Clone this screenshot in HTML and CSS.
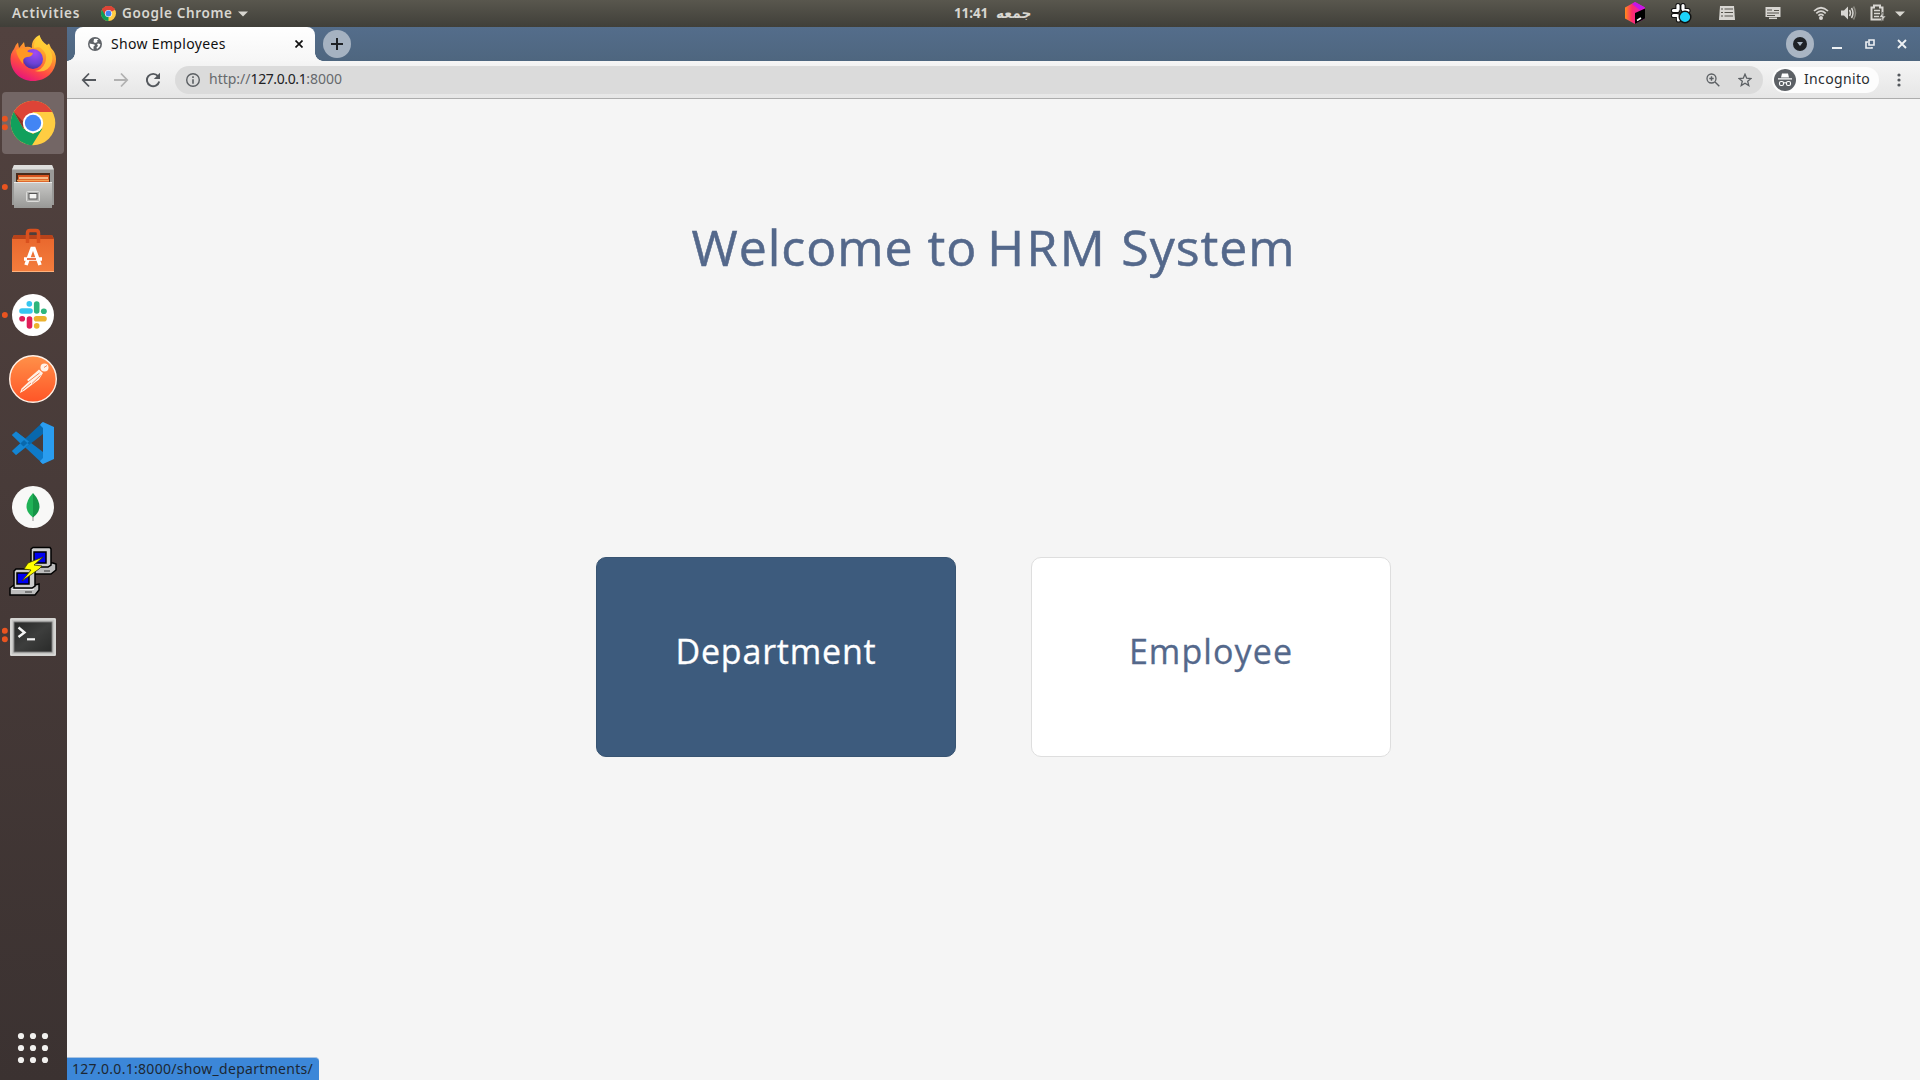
FILE: index.html
```html
<!DOCTYPE html>
<html lang="en">
<head>
<meta charset="utf-8">
<title>Show Employees</title>
<link rel="stylesheet" href="styles.css">
</head>
<body>
<header class="panel">
  <span class="activities">Activities</span>
  <svg class="app-icon" viewBox="0 0 44 44"><circle cx="22" cy="22" r="22" fill="#fc4"/><path d="M22 22 2.900 11A22 22 0 0 1 41.100 11Z" fill="#dd4437"/><path d="M22 22 22 44A22 22 0 0 1 2.900 11Z" fill="#0f9d58"/><path d="M22 11H41A22 22 0 0 0 2.900 11L12 27Z" fill="#dd4437"/><circle cx="22" cy="22" r="10.500" fill="#fff"/><circle cx="22" cy="22" r="8.500" fill="#4285f4"/></svg>
  <span class="app-name">Google Chrome</span>
  <svg class="caret" viewBox="0 0 10 6"><path d="M0 .5H10L5 5.500Z" fill="#d8d6d0"/></svg>
  <span class="clock"><span class="time">11:41</span><span class="day" dir="rtl">جمعه</span></span>
  <div class="tray">
    <svg class="tray-icon" viewBox="0 0 24 27"><defs><linearGradient id="cube" x1="0" x2="1"><stop offset="0" stop-color="#ff8a1c"/><stop offset=".35" stop-color="#ff2d6b"/><stop offset="1" stop-color="#e318d8"/></linearGradient></defs><path d="M12 2 22 7.500V18.500L12 24 2 18.500V7.500Z" fill="url(#cube)"/><path d="M12 2 22 7.500 17 10 9 4Z" fill="#c317e8"/><path d="M12 13 22 8.500V18.500L12 24Z" fill="#000"/><path d="M14 20.500 18 18" stroke="#fff" stroke-width="1.500"/></svg>
    <svg class="tray-icon" viewBox="0 0 24 27"><g stroke-linecap="round"><g stroke="#111" stroke-width="5.200"><path d="M9 5.500V9.500M14 5.500V8M4.500 10.500H8.500M4.500 15.500H8M9.500 16V20M14.500 10.500H19"/></g><g stroke="#fff" stroke-width="3.200"><path d="M9 5.500V9.500M14 5.500V9M4.500 10.500H8.500M4.500 15.500H8M9.500 16V20M14.500 10.500H19"/></g></g><circle cx="16" cy="17" r="5.800" fill="#1bd3fb" stroke="#111" stroke-width="1.400"/></svg>
    <svg class="tray-icon" viewBox="0 0 24 27"><path d="M5 6H19L20 20H4Z" fill="#d8d6d2"/><path d="M6 9H8M9.500 9H18M6 12.500H8M9.500 12.500H18M6 16H8M9.500 16H18" stroke="#55534c" stroke-width="1.200"/></svg>
    <svg class="tray-icon" viewBox="0 0 24 27"><path d="M4.500 7H19.500V17H4.500Z" fill="#d8d6d2"/><path d="M6 10H11M6 13H18M13 10.500H18M6 15.500H14" stroke="#55534c" stroke-width="1.200"/><path d="M8 18.300H16" stroke="#d8d6d2" stroke-width="1.500"/></svg>
    <svg class="tray-icon wifi" viewBox="0 0 24 27"><g fill="none" stroke="#d8d6d2" stroke-width="1.700"><path d="M5 11Q12 4.500 19 11M7.300 13.300Q12 9 16.700 13.300M9.400 15.600Q12 13.300 14.600 15.600"/></g><circle cx="12" cy="18" r="2" fill="#d8d6d2"/></svg>
    <svg class="tray-icon sound" viewBox="0 0 24 27"><path d="M5 10.500H8L12 6.500V19.500L8 15.500H5Z" fill="#d8d6d2"/><path d="M13.500 10Q15.500 13 13.500 16M15.500 8Q18.500 13 15.500 18" fill="none" stroke="#d8d6d2" stroke-width="1.500"/><path d="M17.500 6.500Q21.500 13 17.500 19.500" fill="none" stroke="#8a8880" stroke-width="1.500"/></svg>
    <svg class="tray-icon battery" viewBox="0 0 24 27"><path d="M8 5.500H14V7.500H16.500V19.500H5.500V7.500H8Z" fill="none" stroke="#d8d6d2" stroke-width="2"/><path d="M8 10.500H14M8 13.500H14M8 16.500H13" stroke="#d8d6d2" stroke-width="1.500"/><path d="M17 12 13 17.500H16L15 22 20 16H17Z" fill="#d8d6d2" stroke="#4b4a43" stroke-width=".6"/></svg>
    <svg class="caret tray-caret" viewBox="0 0 10 6"><path d="M0 .5H10L5 5.500Z" fill="#d8d6d0"/></svg>
  </div>
</header>
<div class="desktop">
  <nav class="dock">
    <div class="dock-item">
      <svg viewBox="0 0 62 62"><defs><linearGradient id="ff" x1=".8" y1="0" x2=".3" y2="1"><stop offset="0" stop-color="#fff04a"/><stop offset=".35" stop-color="#ffa02c"/><stop offset=".7" stop-color="#ff4a43"/><stop offset="1" stop-color="#e5127f"/></linearGradient><radialGradient id="ffg" cx=".6" cy=".2" r=".9"><stop offset="0" stop-color="#a24af5"/><stop offset=".6" stop-color="#6b42d6"/><stop offset="1" stop-color="#3d2a92"/></radialGradient></defs><path d="M12 21Q13 17 16 14.500L17 20 22 14 23 19Q27 18 30 20C29 14 33 9 37.500 7Q39 13 45 17L47 15.500 49 20Q54 25 54 31C54 44 44 53 31 53S8.500 43 8.500 31Q8.500 25 12 21Z" fill="url(#ff)"/><circle cx="31" cy="31" r="10" fill="url(#ffg)"/><path d="M14 22Q23 17 26 24L31 25Q30 29 25 29Q20 30 21 36Q15 29 14 22Z" fill="#ff9824"/><path d="M37 19Q47 25 43 35Q40 42 33 43Q46 46 50 34Q52 26 45 18Q40 15 37.500 8Q31 14 32 20Z" fill="#ffcf35" opacity=".8"/></svg>
    </div>
    <div class="dock-item active">
      <svg viewBox="0 0 62 62"><circle cx="31" cy="31" r="22.300" fill="#ffcd42"/><path d="M31 20H50.300A22.300 22.300 0 0 0 11.800 19.700L21.500 36.500Z" fill="#dd4437"/><path d="M11.800 19.700A22.300 22.300 0 0 0 30 53.200L40.500 36.500 31 42 21.500 36.500Z" fill="#11a05c"/><path d="M11.800 19.700 21.500 36.500 21.500 30Z" fill="#8a3527"/><circle cx="31" cy="31" r="10.200" fill="#fff"/><circle cx="31" cy="31" r="8.200" fill="#4285f4"/><g fill="#e95420"><circle cx="2.800" cy="26.800" r="3"/><circle cx="2.800" cy="35.200" r="3"/></g></svg>
    </div>
    <div class="dock-item">
      <svg viewBox="0 0 62 62"><defs><linearGradient id="cab" x2="0" y2="1"><stop offset="0" stop-color="#c9c9c7"/><stop offset="1" stop-color="#989896"/></linearGradient></defs><path d="M12 9H50L52 14V49H10V14Z" fill="#9a9a98"/><path d="M12 9H50L52 13.500H10Z" fill="#dededc"/><path d="M14 17H48V27H14Z" fill="#4a2b1c"/><path d="M16 19H47V27H16Z" fill="#d9541f"/><path d="M17 22H46" stroke="#ffe2b4" stroke-width="1.400"/><path d="M15 24.500H47" stroke="#f3a458" stroke-width="1.500"/><path d="M12 26H50V52H12Z" fill="url(#cab)"/><path d="M12 26.500H50" stroke="#e9e9e7"/><rect x="24.500" y="35.500" width="13" height="10" rx="1" fill="#b4b4b2" stroke="#dcdcda"/><rect x="27" y="37.500" width="8" height="5.500" fill="#f4f4f2" stroke="#555"/><circle cx="2.800" cy="31" r="3" fill="#e95420"/></svg>
    </div>
    <div class="dock-item">
      <svg viewBox="0 0 62 62"><defs><linearGradient id="bag" x2="0" y2="1"><stop offset="0" stop-color="#e8662c"/><stop offset="1" stop-color="#f47d3d"/></linearGradient></defs><path d="M12 15H50L52 19V52H10V19Z" fill="url(#bag)"/><path d="M12 15H50L52 19H10Z" fill="#b8431a"/><path d="M25.500 23V13Q25.500 10.500 28 10.500H34Q36.500 10.500 36.500 13V23" fill="none" stroke="#d9501e" stroke-width="3.500"/><path d="M10 51.500H52" stroke="#ffb27d"/><g fill="none" stroke="#fff" stroke-width="3.600"><path d="M24 45 30 28.500H32L38 45M22 39H40"/></g><path d="M25 39H34" stroke="#e95420" stroke-width="1.600"/></svg>
    </div>
    <div class="dock-item">
      <svg viewBox="0 0 62 62"><circle cx="31" cy="31" r="21" fill="#fff"/><g stroke-width="5.600" stroke-linecap="round"><path d="M20 27H28" stroke="#36c5f0"/><path d="M27.300 19.800V20" stroke="#36c5f0"/><path d="M34.700 20V27" stroke="#2eb67d"/><path d="M42 27.300H41.700" stroke="#2eb67d"/><path d="M42 34.700H34.500" stroke="#ecb22e"/><path d="M34.700 42V41.700" stroke="#ecb22e"/><path d="M27.500 42V35" stroke="#e01e5a"/><path d="M20 34.700H20.300" stroke="#e01e5a"/></g><circle cx="2.800" cy="31" r="3" fill="#e95420"/></svg>
    </div>
    <div class="dock-item">
      <svg viewBox="0 0 62 62"><defs><linearGradient id="pm" x2="0" y2="1"><stop offset="0" stop-color="#ff9149"/><stop offset="1" stop-color="#ff5527"/></linearGradient></defs><circle cx="31" cy="31" r="23.300" fill="url(#pm)" stroke="#fff0e5" stroke-width="1.400"/><circle cx="42.500" cy="19.500" r="4" fill="#fff1e6"/><path d="M37 21.500 41 25 37 31.500 31 36 22.500 42.500 18 45 19.500 40.500 27 33.500 25 32Z" fill="#fff1e6"/><path d="M26.500 33.500 37.500 25M30 35.500 38.500 27.500M20 42.500 29 35M42 19.500 45 17.500" stroke="#f57a48" stroke-width=".9"/></svg>
    </div>
    <div class="dock-item">
      <svg viewBox="0 0 62 62"><path d="M14 19.500 10 23 41 52V40Z" fill="#0e7ac9"/><path d="M10 39 14 43 41 22V10Z" fill="#0868ad"/><path d="M10 23 14 19.500 27 29.500 21.500 34.500ZM10 39 14 43 27 32.500 22 28Z" fill="#1585d2"/><path d="M41 10 52 15V47L41 52Q39 51 38 49L41 46V16L38 13Q39 11 41 10Z" fill="#2a9df0"/></svg>
    </div>
    <div class="dock-item">
      <svg viewBox="0 0 62 62"><circle cx="31" cy="31" r="21" fill="#f8f8f7"/><path d="M31 38V45" stroke="#aaa" stroke-width="1.300"/><path d="M31 17Q24.500 24 24.500 31Q25 37 31 41.500Z" fill="#20b257"/><path d="M31 17Q37.500 24 37.500 31Q37 37 31 41.500Z" fill="#159447"/></svg>
    </div>
    <div class="dock-item">
      <svg viewBox="0 0 62 62"><g stroke="#000" stroke-width="1.500"><path d="M26 26 30 23H51L54 24V30L49 34H26Z" fill="#bdbdbd"/><path d="M29 9 31 7.500H48L49 9V25L46 27H29Z" fill="#ccc"/><path d="M32 12H44V23H32Z" fill="#0000f0"/><path d="M8 48 12 45H33L37 44V50L33 55H8Z" fill="#bdbdbd"/><path d="M12 31 14 29H31L33 31V46L30 48H12Z" fill="#ccc"/><path d="M15 33H27V44H15Z" fill="#0000f0"/></g><path d="M10 49.500H32" stroke="#eee"/><path d="M23 52H30M42 31H48" stroke="#333"/><path d="M41 17 26 23 22 29 29 30 20 41 37 29 40 26 32 25Z" fill="#ff0" stroke="#3c3c00" stroke-width=".8"/></svg>
    </div>
    <div class="dock-item">
      <svg viewBox="0 0 62 62"><defs><linearGradient id="term" x2="1" y2="1"><stop offset="0" stop-color="#272827"/><stop offset=".5" stop-color="#3d3e3d"/><stop offset="1" stop-color="#292a29"/></linearGradient></defs><rect x="8" y="14" width="46" height="38" rx="1.500" fill="#c6c6c4"/><rect x="9" y="15" width="44" height="36" fill="none" stroke="#e2e2e0"/><rect x="12" y="18" width="38" height="30" fill="url(#term)" stroke="#777"/><path d="M16.500 23.500 22.500 28.500 16.500 33" fill="none" stroke="#f4f4f4" stroke-width="2.400"/><path d="M25 35.300H33" stroke="#f4f4f4" stroke-width="2.200"/><g fill="#e95420"><circle cx="2.800" cy="26.800" r="3"/><circle cx="2.800" cy="35.200" r="3"/></g></svg>
    </div>
    <div class="dock-item show-apps">
      <svg viewBox="0 0 62 62"><g fill="#f2f1ef"><circle cx="19" cy="19" r="3.100"/><circle cx="31" cy="19" r="3.100"/><circle cx="43" cy="19" r="3.100"/><circle cx="19" cy="31" r="3.100"/><circle cx="31" cy="31" r="3.100"/><circle cx="43" cy="31" r="3.100"/><circle cx="19" cy="43" r="3.100"/><circle cx="31" cy="43" r="3.100"/><circle cx="43" cy="43" r="3.100"/></g></svg>
    </div>
  </nav>
  <div class="browser">
    <div class="tabstrip">
      <div class="tab">
        <svg class="favicon" viewBox="0 0 14 14"><circle cx="7" cy="7" r="7" fill="#5f6368"/><path d="M1.500 6.500Q4 7 6.500 7.500 7.500 9 5.500 9.500L5.500 12.500Q1.500 11 1.500 6.500ZM6 2Q9 1.200 10.500 2.600L9 3.500 9.500 5 7 6 5.500 5ZM9 7Q10.500 6 12.500 7.500 12 10.500 9 12L8.500 10.500 10 9Z" fill="#fff"/></svg>
        <span class="tab-title">Show Employees</span>
        <svg class="tab-close" viewBox="0 0 8 8"><path d="M.5 .5 7.500 7.500M7.500 .5 .5 7.500" stroke="#111" stroke-width="1.700"/></svg>
      </div>
      <svg class="round-button" viewBox="0 0 28 28"><circle cx="14" cy="14" r="14" fill="#a5b2c1"/><path d="M14 8V20M8 14H20" stroke="#1e2226" stroke-width="2"/></svg>
      <div class="window-controls">
        <svg class="round-button" viewBox="0 0 28 28"><circle cx="14" cy="14" r="14" fill="#a9b5c3"/><circle cx="14" cy="14" r="7" fill="#1f2226"/><path d="M11 12H17L14 16Z" fill="#a9b5c3"/></svg>
        <svg class="win" viewBox="0 0 10 10"><path d="M0 9H10" stroke="#eef1f4" stroke-width="2"/></svg>
        <svg class="win" viewBox="0 0 10 10"><path d="M4 1H9V6H4ZM3 3H1V9H7V8" fill="none" stroke="#eef1f4" stroke-width="1.600"/></svg>
        <svg class="win" viewBox="0 0 10 10"><path d="M1 1 9 9M9 1 1 9" stroke="#eef1f4" stroke-width="1.900"/></svg>
      </div>
    </div>
    <div class="toolbar">
      <svg class="nav-icon" viewBox="0 0 16 16"><path d="M15 8H2M8 1.500 1.800 8 8 14.500" fill="none" stroke="#54585d" stroke-width="1.800"/></svg>
      <svg class="nav-icon" viewBox="0 0 16 16"><path d="M1 8H14M8 1.500 14.200 8 8 14.500" fill="none" stroke="#b1b1b1" stroke-width="1.800"/></svg>
      <svg class="nav-icon" viewBox="0 0 16 16"><path d="M13 4.200A6.200 6.200 0 1 0 14.200 9.500" fill="none" stroke="#54585d" stroke-width="1.900"/><path d="M15 .8V7H8.800Z" fill="#54585d"/></svg>
      <div class="omnibox">
        <svg class="info" viewBox="0 0 14 14"><circle cx="7" cy="7" r="6.300" fill="none" stroke="#5b5f63" stroke-width="1.400"/><path d="M7 3.300V4.900M7 6.200V10.700" stroke="#5b5f63" stroke-width="1.600"/></svg>
        <span class="url"><span class="scheme">http://</span><span class="host">127.0.0.1</span><span class="port">:8000</span></span>
        <svg class="zoom" viewBox="0 0 14 14"><circle cx="5.500" cy="5.500" r="4.500" fill="none" stroke="#5b5f63" stroke-width="1.300"/><path d="M9 9 13.300 13.300M5.500 3.300V7.700M3.300 5.500H7.700" stroke="#5b5f63" stroke-width="1.400"/></svg>
        <svg class="star" viewBox="0 0 14 14"><path d="M7 1.200 8.700 5.200 13 5.500 9.700 8.300 10.800 12.600 7 10.300 3.200 12.600 4.300 8.300 1 5.500 5.300 5.200Z" fill="none" stroke="#5b5f63" stroke-width="1.300"/></svg>
      </div>
      <div class="incognito">
        <svg class="avatar" viewBox="0 0 22 22"><circle cx="11" cy="11" r="11" fill="#5c6065"/><path d="M7 8.500 8 4.500H14L15 8.500ZM4 9.300H18V10.400H4Z" fill="#fff"/><g fill="none" stroke="#fff" stroke-width="1.100"><rect x="5.500" y="12.500" width="4" height="4" rx="1.500"/><rect x="12.500" y="12.500" width="4" height="4" rx="1.500"/><path d="M9.500 13.800H12.500"/></g></svg>
        <span class="incognito-label">Incognito</span>
      </div>
      <svg class="menu" viewBox="0 0 4 16"><g fill="#54585d"><circle cx="2" cy="3" r="1.600"/><circle cx="2" cy="8" r="1.600"/><circle cx="2" cy="13" r="1.600"/></g></svg>
    </div>
    <main class="page">
      <h1 class="title">Welcome to <span class="acronym">HRM</span> System</h1>
      <div class="cards">
        <a class="card card-primary"><span class="label-department">Department</span></a>
        <a class="card"><span class="label-employee">Employee</span></a>
      </div>
      <div class="status">127.0.0.1:8000/show_departments/</div>
    </main>
  </div>
</div>
</body>
</html>
```
FILE: styles.css
```css
* { box-sizing: border-box; }
body {
  margin: 0;
  width: 1920px;
  height: 1080px;
  overflow: hidden;
  display: flex;
  flex-direction: column;
  font-family: "Noto Sans", "DejaVu Sans", sans-serif;
  font-size: 14px;
  white-space: nowrap;
}
svg { display: block; flex: none; }

/* System panel */
.panel {
  flex: none;
  height: 27px;
  display: flex;
  align-items: center;
  padding: 0 12px;
  background: linear-gradient(#59574e, #403f39);
  color: #d8d6d0;
  font-size: 13.5px;
  font-weight: 600;
  line-height: 27px;
}
.activities { width: 89px; letter-spacing: .8px; }
.app-icon { width: 15px; height: 15px; margin-right: 6px; }
.app-name { width: 116px; letter-spacing: .65px; }
.caret { width: 10px; height: 6px; }
.clock { display: flex; margin-left: 706px; }
.time { width: 42px; font-weight: 700; letter-spacing: -.1px; }
.day { font-family: "DejaVu Sans", sans-serif; font-size: 13.8px; }
.tray { display: flex; align-items: center; margin-left: auto; }
.tray-icon { width: 24px; height: 27px; margin-right: 22px; }
.tray-icon.wifi { margin-left: 2px; margin-right: 3px; }
.tray-icon.sound { margin-right: 6px; }
.tray-icon.battery { margin-right: 5px; }
.tray-caret { margin-right: 3px; }

.desktop { flex: 1; display: flex; min-height: 0; }

/* Dock */
.dock {
  flex: none;
  width: 67px;
  display: flex;
  flex-direction: column;
  gap: 2px;
  padding: 1px 3px 1px 2px;
  background: linear-gradient(#52423f, #3b3231);
}
.dock-item { width: 62px; height: 62px; border-radius: 4px; }
.dock-item.active { background: #736665; }
.show-apps { margin-top: auto; }

/* Browser window */
.browser { flex: 1; display: flex; flex-direction: column; min-width: 0; }
.tabstrip {
  flex: none;
  height: 34px;
  display: flex;
  align-items: center;
  padding: 0 13px 0 8px;
  background: linear-gradient(#546d8b, #4e667f);
}
.tab {
  position: relative;
  width: 240px;
  height: 34px;
  display: flex;
  align-items: center;
  padding: 0 12px 0 13px;
  margin-right: 8px;
  border-radius: 8px 8px 0 0;
  background: linear-gradient(#fff, #f6f6f6);
  color: #111;
}
.tab::before,
.tab::after {
  content: "";
  position: absolute;
  bottom: 0;
  width: 8px;
  height: 8px;
}
.tab::before { left: -8px; background: radial-gradient(circle at 0 0, transparent 7.5px, #f6f6f6 8px); }
.tab::after { right: -8px; background: radial-gradient(circle at 100% 0, transparent 7.5px, #f6f6f6 8px); }
.favicon { width: 14px; height: 14px; margin-right: 9px; }
.tab-title { padding-bottom: 2px; letter-spacing: .33px; }
.tab-close { width: 8px; height: 8px; margin-left: auto; }
.round-button { width: 28px; height: 28px; }
.window-controls { display: flex; align-items: center; margin-left: auto; gap: 22.5px; }
.window-controls .round-button { margin-right: -4px; }
.win { width: 10px; height: 10px; }

.toolbar {
  flex: none;
  height: 38px;
  display: flex;
  align-items: center;
  padding: 0 19.5px 0 14px;
  border-bottom: 1px solid #adadad;
  background: linear-gradient(#f5f5f5, #e6e6e6);
}
.nav-icon { width: 16px; height: 16px; margin-right: 16px; }
.nav-icon:nth-child(3) { margin-right: 14px; }
.omnibox {
  width: 1588px;
  height: 28px;
  display: flex;
  align-items: center;
  padding: 0 11px;
  border-radius: 14px;
  background: #dbdbdb;
  color: #66696d;
}
.info { width: 14px; height: 14px; margin-right: 9px; }
.url { padding-bottom: 2px; }
.host { color: #202124; letter-spacing: -.4px; }
.zoom { width: 14px; height: 14px; margin-left: auto; margin-right: 18px; }
.star { width: 14px; height: 14px; }
.incognito {
  width: 107px;
  height: 26px;
  display: flex;
  align-items: center;
  margin-left: 9px;
  padding-left: 2px;
  border-radius: 13px;
  background: #fdfdfd;
  color: #2b2d30;
}
.avatar { width: 22px; height: 22px; margin-right: 8px; }
.incognito-label { padding-bottom: 2px; letter-spacing: .35px; }
.menu { width: 4px; height: 16px; margin-left: auto; }

/* Page */
.page {
  position: relative;
  flex: 1;
  display: flex;
  flex-direction: column;
  align-items: center;
  background: #f5f5f5;
  font-family: "Open Sans", sans-serif;
}
.title {
  margin: 111px 0 0;
  font-size: 50px;
  font-weight: 400;
  line-height: 74px;
  letter-spacing: .95px;
  color: #54688b;
  -webkit-text-stroke: .5px #54688b;
}
.acronym { margin-left: -4px; letter-spacing: 2.5px; }
.cards { display: flex; gap: 75px; margin-top: 273px; }
.card {
  width: 360px;
  height: 200px;
  display: flex;
  justify-content: center;
  padding-top: 70px;
  border: 1px solid #dedede;
  border-radius: 10px;
  background: #fff;
  color: #54688b;
  font-size: 34px;
  line-height: 46px;
  -webkit-text-stroke: .3px currentColor;
}
.card-primary { border-color: #385472; background: #3d5b7d; color: #fff; }
.label-department { letter-spacing: .8px; }
.label-employee { letter-spacing: 1.1px; }
.status {
  position: absolute;
  left: 0;
  bottom: 0;
  width: 252px;
  height: 23px;
  padding-left: 5px;
  border-top: 1px solid #a9c4e2;
  border-radius: 0 4px 0 0;
  background: #3c87d8;
  color: #1c2733;
  font-family: "Noto Sans", sans-serif;
  line-height: 22px;
  letter-spacing: .3px;
}
```
